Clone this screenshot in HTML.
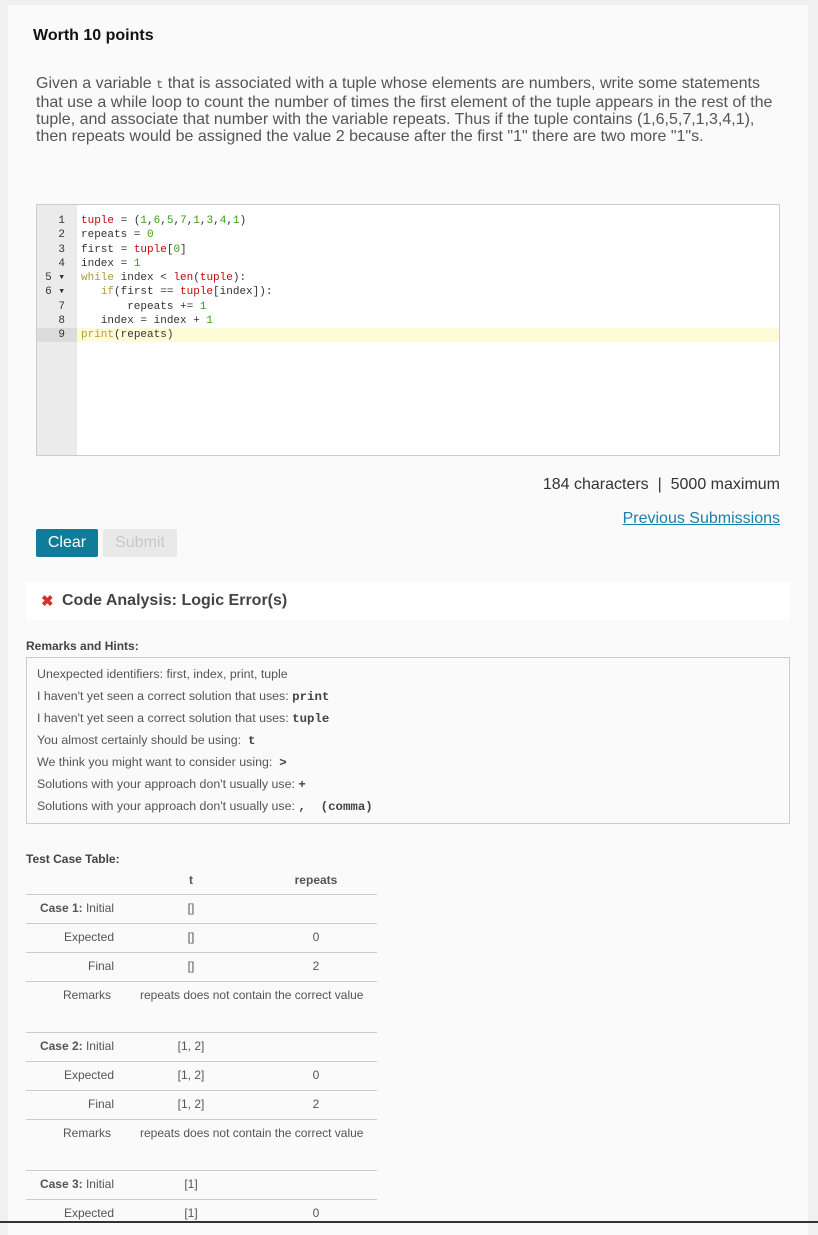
<!DOCTYPE html>
<html><head><meta charset="utf-8"><style>
body{margin:0;background:#f0f0f0;font-family:"Liberation Sans",Arial,sans-serif;width:818px;height:1223px;overflow:hidden;position:relative}
.card{position:absolute;left:8px;top:5px;width:800px;height:1230px;background:#fafafa}
.a{position:absolute}
.code{font-family:"Liberation Mono","DejaVu Sans Mono",monospace;font-size:11px;color:#333}
.cl{position:absolute;left:44px;height:14px;line-height:14px;white-space:pre}
.ln{position:absolute;left:0;width:28px;text-align:right;height:14px;line-height:14px}
.r{color:#c5060b}.g{color:#3a9c15}.k{color:#b39a3a}
.hint{position:absolute;left:37px;font-size:12.4px;color:#555}
.hint b{font-family:"Liberation Mono",monospace;color:#444}
.tr{position:absolute;left:26px;width:351px;height:29px;font-size:12px;color:#555;line-height:29px}
.tr .l{position:absolute;right:263px;text-align:right}
.tr .t{position:absolute;left:140px;width:50px;text-align:center}
.tr .v{position:absolute;left:250px;width:80px;text-align:center}
.hr{position:absolute;left:26px;width:351px;height:1px;background:#ccc}
</style></head><body>
<div class="card"></div>
<div class="a" style="left:33px;top:27px;font-size:16px;color:#111;font-weight:bold">Worth 10 points</div>
<div class="a" style="left:36px;top:75px;width:742px;font-size:16px;line-height:17px;color:#555">Given a variable <span style="font-family:'Liberation Mono',monospace;font-size:12px">t</span> that is associated with a tuple whose elements are numbers, write some statements that use a while loop to count the number of times the first element of the tuple appears in the rest of the tuple, and associate that number with the variable repeats. Thus if the tuple contains (1,6,5,7,1,3,4,1), then repeats would be assigned the value 2 because after the first "1" there are two more "1"s.</div>
<div class="a" style="left:36px;top:204px;width:742px;height:250px;border:1px solid #ccc;background:#fff"></div>
<div class="a" style="left:37px;top:205px;width:40px;height:250px;background:#ebebeb"></div>
<div class="a" style="left:77px;top:328px;width:702px;height:14px;background:#fefbd8"></div>
<div class="a" style="left:37px;top:328px;width:40px;height:14px;background:#dcdcdc"></div>
<div class="a code" style="left:37px;top:214px;width:740px">
<div class="ln" style="top:0">1</div><div class="cl" style="top:0"><span class="r">tuple</span> = (<span class="g">1</span>,<span class="g">6</span>,<span class="g">5</span>,<span class="g">7</span>,<span class="g">1</span>,<span class="g">3</span>,<span class="g">4</span>,<span class="g">1</span>)</div>
<div class="ln" style="top:14.25px">2</div><div class="cl" style="top:14.25px">repeats = <span class="g">0</span></div>
<div class="ln" style="top:28.5px">3</div><div class="cl" style="top:28.5px">first = <span class="r">tuple</span>[<span class="g">0</span>]</div>
<div class="ln" style="top:42.75px">4</div><div class="cl" style="top:42.75px">index = <span class="g">1</span></div>
<div class="ln" style="top:57px">5 ▾</div><div class="cl" style="top:57px"><span class="k">while</span> index &lt; <span class="r">len</span>(<span class="r">tuple</span>):</div>
<div class="ln" style="top:71.25px">6 ▾</div><div class="cl" style="top:71.25px">   <span class="k">if</span>(first == <span class="r">tuple</span>[index]):</div>
<div class="ln" style="top:85.5px">7</div><div class="cl" style="top:85.5px">       repeats += <span class="g">1</span></div>
<div class="ln" style="top:99.75px">8</div><div class="cl" style="top:99.75px">   index = index + <span class="g">1</span></div>
<div class="ln" style="top:114px">9</div><div class="cl" style="top:114px"><span class="k">print</span>(repeats)</div>
</div>
<div class="a" style="right:38px;top:476px;font-size:16px;color:#333">184 characters &nbsp;|&nbsp; 5000 maximum</div>
<div class="a" style="right:38px;top:510px;font-size:16px;color:#1a7fa8;text-decoration:underline">Previous Submissions</div>
<div class="a" style="left:36px;top:529px;width:62px;height:28px;background:#117b9a;color:#fff;border-radius:2px;font-size:16px;line-height:28px;text-align:center">Clear</div>
<div class="a" style="left:103px;top:529px;width:74px;height:28px;background:#e9e9e9;color:#c8c8c8;border-radius:2px;font-size:16px;line-height:28px;text-align:center">Submit</div>
<div class="a" style="left:26px;top:582px;width:764px;height:38px;background:#fff"></div>
<div class="a" style="left:41px;top:592px;font-size:15px;color:#d9302c;font-weight:bold">✖</div>
<div class="a" style="left:62px;top:592px;font-size:16px;color:#444;font-weight:bold">Code Analysis: Logic Error(s)</div>
<div class="a" style="left:26px;top:639px;font-size:12px;color:#444;font-weight:bold">Remarks and Hints:</div>
<div class="a" style="left:26px;top:657px;width:762px;height:165px;border:1px solid #ccc;background:#fafafa"></div>
<div class="hint" style="top:667px">Unexpected identifiers: first, index, print, tuple</div>
<div class="hint" style="top:689px">I haven't yet seen a correct solution that uses: <b>print</b></div>
<div class="hint" style="top:711px">I haven't yet seen a correct solution that uses: <b>tuple</b></div>
<div class="hint" style="top:733px">You almost certainly should be using: &nbsp;<b>t</b></div>
<div class="hint" style="top:755px">We think you might want to consider using: &nbsp;<b>&gt;</b></div>
<div class="hint" style="top:777px">Solutions with your approach don't usually use: <b>+</b></div>
<div class="hint" style="top:799px">Solutions with your approach don't usually use: <b>, &nbsp;(comma)</b></div>
<div class="a" style="left:26px;top:852px;font-size:12px;color:#444;font-weight:bold">Test Case Table:</div>
<div class="tr" style="top:866px;font-weight:bold"><span class="t">t</span><span class="v">repeats</span></div>
<div class="hr" style="top:894px"></div>
<div class="tr" style="top:894px"><span class="l"><b>Case 1:</b> Initial</span><span class="t">[]</span></div>
<div class="hr" style="top:923px"></div>
<div class="tr" style="top:923px"><span class="l">Expected</span><span class="t">[]</span><span class="v">0</span></div>
<div class="hr" style="top:952px"></div>
<div class="tr" style="top:952px"><span class="l">Final</span><span class="t">[]</span><span class="v">2</span></div>
<div class="hr" style="top:981px"></div>
<div class="tr" style="top:981px"><span class="l" style="right:266px">Remarks</span><span style="position:absolute;left:114px">repeats does not contain the correct value</span></div>
<div class="hr" style="top:1032px"></div>
<div class="tr" style="top:1032px"><span class="l"><b>Case 2:</b> Initial</span><span class="t">[1, 2]</span></div>
<div class="hr" style="top:1061px"></div>
<div class="tr" style="top:1061px"><span class="l">Expected</span><span class="t">[1, 2]</span><span class="v">0</span></div>
<div class="hr" style="top:1090px"></div>
<div class="tr" style="top:1090px"><span class="l">Final</span><span class="t">[1, 2]</span><span class="v">2</span></div>
<div class="hr" style="top:1119px"></div>
<div class="tr" style="top:1119px"><span class="l" style="right:266px">Remarks</span><span style="position:absolute;left:114px">repeats does not contain the correct value</span></div>
<div class="hr" style="top:1170px"></div>
<div class="tr" style="top:1170px"><span class="l"><b>Case 3:</b> Initial</span><span class="t">[1]</span></div>
<div class="hr" style="top:1199px"></div>
<div class="tr" style="top:1199px"><span class="l">Expected</span><span class="t">[1]</span><span class="v">0</span></div>
<div class="a" style="left:0;top:1221px;width:818px;height:2px;background:#333"></div>
</body></html>
